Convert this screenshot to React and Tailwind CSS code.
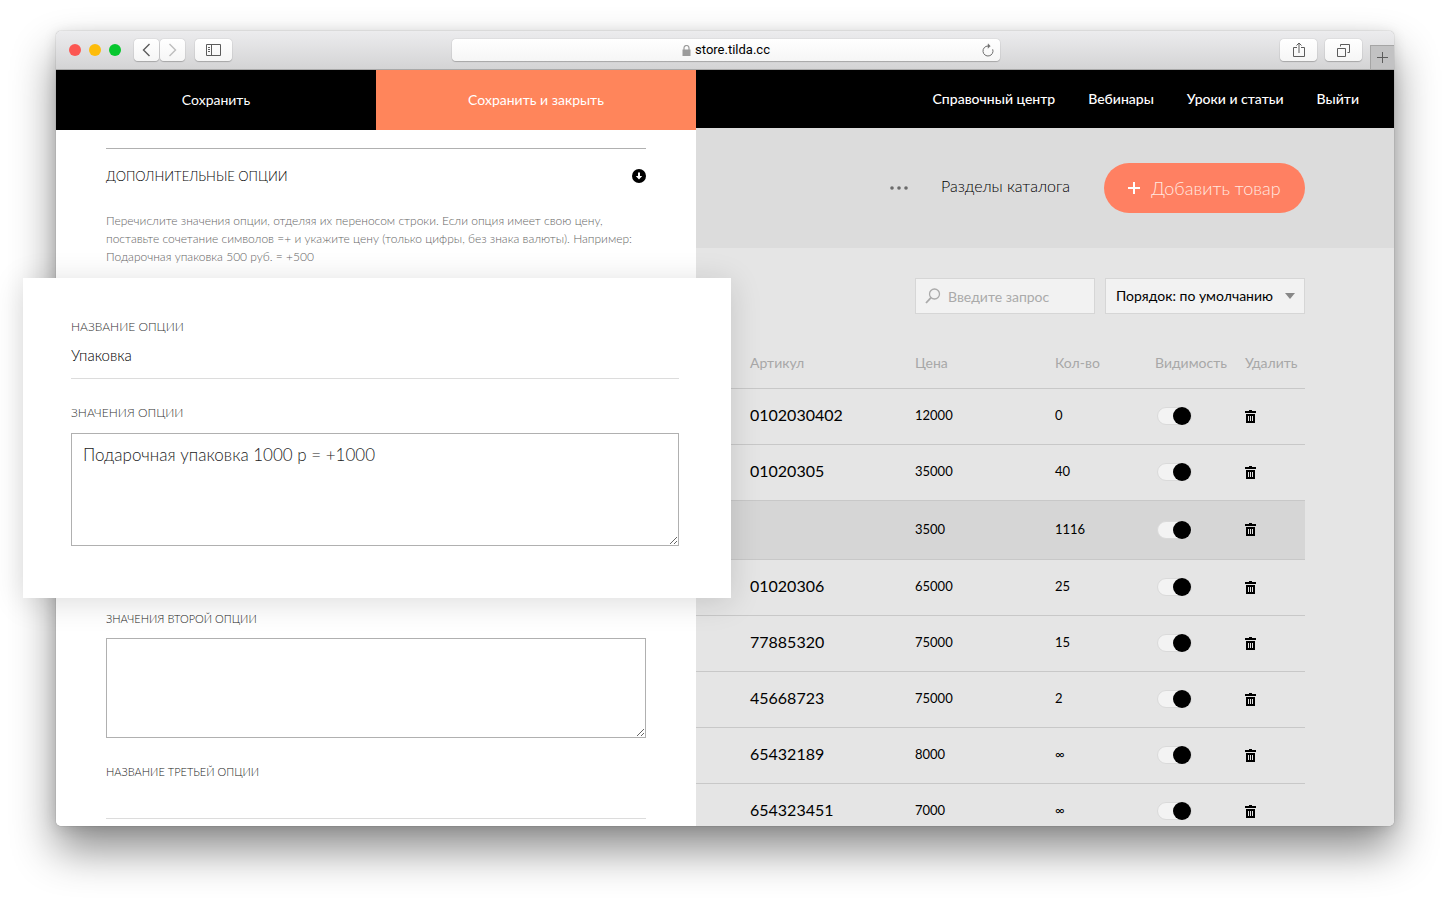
import React, { useState } from 'react';

const products = [
  { sku: '0102030402', price: '12000', qty: '0' },
  { sku: '01020305', price: '35000', qty: '40' },
  { sku: '', price: '3500', qty: '1116', active: true },
  { sku: '01020306', price: '65000', qty: '25' },
  { sku: '77885320', price: '75000', qty: '15' },
  { sku: '45668723', price: '75000', qty: '2' },
  { sku: '65432189', price: '8000', qty: '∞' },
  { sku: '654323451', price: '7000', qty: '∞' },
];

const navLinks = ['Справочный центр', 'Вебинары', 'Уроки и статьи', 'Выйти'];

const toolButton =
  'flex h-[22px] items-center justify-center rounded bg-gradient-to-b from-white to-[#f6f6f6] shadow-[0_0_1px_rgba(0,0,0,0.35),0_1px_1px_rgba(0,0,0,0.2)]';

const TrashIcon = () => (
  <svg width="11" height="13" viewBox="0 0 11 13" shapeRendering="crispEdges">
    <path d="M4 0h3v1h4v2H0V1h4z" fill="#000" />
    <path d="M1 4h9v9H1z" fill="#000" />
    <path d="M3 6h1v5H3zM5 6h1v5H5zM7 6h1v5H7z" fill="#e5e5e5" />
  </svg>
);

const BrowserBar = () => (
  <div className="flex h-[39px] shrink-0 items-center rounded-t-[5px] border-b border-[#a9a9a9] bg-gradient-to-b from-[#ececee] to-[#d4d4d5]">
    <div className="flex gap-2 pl-[13px]">
      <span className="h-3 w-3 rounded-full bg-[#fc5753]" />
      <span className="h-3 w-3 rounded-full bg-[#fdbc0a]" />
      <span className="h-3 w-3 rounded-full bg-[#06c72e]" />
    </div>
    <div className="ml-[13px] flex gap-px">
      <button aria-label="Назад" className={`${toolButton} w-[25px]`}>
        <svg width="9" height="14" viewBox="0 0 9 14" fill="none" stroke="#5c5c5c" strokeWidth="1.4">
          <path d="M7.5 1L1.5 7l6 6" />
        </svg>
      </button>
      <button aria-label="Вперёд" className={`${toolButton} w-[25px]`}>
        <svg width="9" height="14" viewBox="0 0 9 14" fill="none" stroke="#bdbdbd" strokeWidth="1.4">
          <path d="M1.5 1l6 6-6 6" />
        </svg>
      </button>
    </div>
    <button aria-label="Боковое меню" className={`${toolButton} ml-[10px] w-[37px]`}>
      <svg width="15" height="12" viewBox="0 0 15 12" fill="none" stroke="#5c5c5c">
        <path d="M.5.5h14v11H.5zM5.5.5v11M2 3.5h2M2 5.5h2M2 7.5h2" />
      </svg>
    </button>
    <div className="flex flex-1 justify-center pr-[76px] pl-4">
      <div className={`${toolButton} relative w-full max-w-[548px] gap-1`}>
        <svg width="9" height="11" viewBox="0 0 9 11">
          <path d="M2 5V3a2.5 2.5 0 015 0v2" fill="none" stroke="#9b9b9b" strokeWidth="1.2" />
          <path d="M.5 4.500h8V11h-8z" fill="#9b9b9b" />
        </svg>
        <span className="font-[Roboto,sans-serif] text-[13px] text-black">store.tilda.cc</span>
        <button aria-label="Обновить" className="absolute right-[6px]">
          <svg width="12" height="14" viewBox="0 0 12 14" fill="none" stroke="#6e6e6e">
            <path d="M10.700 6.300A5 5 0 116 3h1.500" />
            <path d="M6 .8L8.300 3 6 5.300z" fill="#6e6e6e" strokeWidth=".4" />
          </svg>
        </button>
      </div>
    </div>
    <button aria-label="Поделиться" className={`${toolButton} w-[37px]`}>
      <svg width="12" height="16" viewBox="0 0 12 16" fill="none" stroke="#5c5c5c">
        <path d="M4 5.500H.5v9h11v-9H8M6 11V1M3.500 3.500L6 1l2.500 2.500" />
      </svg>
    </button>
    <button aria-label="Вкладки" className={`${toolButton} ml-2 w-[37px]`}>
      <svg width="13" height="13" viewBox="0 0 13 13" fill="none" stroke="#5c5c5c">
        <path d="M.5 4.500h8v8h-8zM3.500 2.500v-2h9v8h-2" />
      </svg>
    </button>
    <button
      aria-label="Новая вкладка"
      className="ml-2 flex h-6 w-6 items-center justify-center self-end border-t border-l border-[#a5a5a5] bg-[#c2c2c3]"
    >
      <svg width="11" height="11" viewBox="0 0 11 11" stroke="#5c5c5c">
        <path d="M5.500 0v11M0 5.500h11" />
      </svg>
    </button>
  </div>
);

const EditPanel = () => {
  const [name, setName] = useState('Упаковка');
  const [values, setValues] = useState('Подарочная упаковка 1000 р = +1000');

  return (
    <section className="relative z-10 flex w-[640px] shrink-0 flex-col rounded-bl-[5px] bg-white">
      <div className="flex h-[60px] shrink-0 text-sm text-white">
        <button className="flex-1 bg-black">Сохранить</button>
        <button className="flex-1 bg-[#ff855b]">Сохранить и закрыть</button>
      </div>
      <div className="mt-[18px] px-[50px]">
        <div className="flex items-center justify-between border-t border-[#b0b0b0] pt-[19px]">
          <h2 className="text-[13px] leading-4 font-light text-black">ДОПОЛНИТЕЛЬНЫЕ ОПЦИИ</h2>
          <button aria-label="Свернуть">
            <svg width="14" height="14" viewBox="0 0 14 14">
              <circle cx="7" cy="7" r="7" fill="#000" />
              <path d="M6 3.500h2V7h2.200L7 10.500 3.800 7H6z" fill="#fff" />
            </svg>
          </button>
        </div>
        <p className="mt-7 text-xs leading-[18px] font-light text-[#666]">
          Перечислите значения опции, отделяя их переносом строки. Если опция имеет свою цену,
          <br />
          поставьте сочетание символов =+ и укажите цену (только цифры, без знака валюты). Например:
          <br />
          Подарочная упаковка 500 руб. = +500
        </p>

        <div className="relative mt-3 -mr-[85px] -ml-[83px] flex flex-col bg-white pt-10 pr-[52px] pb-[52px] pl-12 shadow-[0_4px_30px_rgba(0,0,0,0.14)]">
          <label htmlFor="option-name" className="text-xs leading-[18px] font-light text-[#333]">
            НАЗВАНИЕ ОПЦИИ
          </label>
          <input
            id="option-name"
            value={name}
            onChange={(e) => setName(e.target.value)}
            className="h-[43px] border-b border-[#dcdcdc] pb-1 text-[15px] font-light text-black outline-none"
          />
          <label htmlFor="option-values" className="mt-[25px] text-xs leading-[18px] font-light text-[#333]">
            ЗНАЧЕНИЯ ОПЦИИ
          </label>
          <textarea
            id="option-values"
            value={values}
            onChange={(e) => setValues(e.target.value)}
            className="mt-[11px] h-[113px] border border-[#b0b0b0] px-[11px] py-2 text-[17px] font-light text-[#222] outline-none"
          />
        </div>

        <div className="flex flex-col pt-3">
          <label htmlFor="second-values" className="text-[11px] leading-[18px] font-light text-[#222]">
            ЗНАЧЕНИЯ ВТОРОЙ ОПЦИИ
          </label>
          <textarea id="second-values" className="mt-[10px] h-[100px] border border-[#b0b0b0] outline-none" />
          <label htmlFor="third-name" className="mt-[25px] text-[11px] leading-[18px] font-light text-[#222]">
            НАЗВАНИЕ ТРЕТЬЕЙ ОПЦИИ
          </label>
          <input id="third-name" className="h-[38px] border-b border-[#dcdcdc] outline-none" />
        </div>
      </div>
    </section>
  );
};

const ProductRow = ({ item }) => (
  <tr className={`border-y border-[#c8c8c8] ${item.active ? 'h-[59px] bg-[#d6d6d6]' : 'h-14'}`}>
    <td className="pb-[3px] pl-[54px] text-base">{item.sku}</td>
    <td className="text-[13px]">{item.price}</td>
    <td className="text-[13px]">{item.qty}</td>
    <td className="pl-[2px]">
      <input
        type="checkbox"
        defaultChecked
        aria-label="Видимость"
        className="flex h-[18px] w-[35px] appearance-none items-center rounded-full border border-[#dadada] bg-[#f3f3f3] before:h-[18px] before:w-[18px] before:shrink-0 before:rounded-full before:bg-black checked:justify-end"
      />
    </td>
    <td>
      <button aria-label="Удалить" className="block">
        <TrashIcon />
      </button>
    </td>
  </tr>
);

const Catalog = () => (
  <div className="flex min-w-0 flex-1 flex-col overflow-hidden rounded-br-[5px] bg-[#e5e5e5]">
    <nav className="flex h-[58px] shrink-0 items-center justify-end gap-[33px] bg-black pr-[35px] text-sm font-medium text-white">
      {navLinks.map((link) => (
        <a key={link} href="#">
          {link}
        </a>
      ))}
    </nav>
    <header className="flex h-[120px] shrink-0 items-center justify-end bg-[#dcdcdc] pr-[89px]">
      <button aria-label="Ещё">
        <svg width="18" height="4" viewBox="0 0 18 4" fill="#6b6b6b">
          <circle cx="2" cy="2" r="1.800" />
          <circle cx="9" cy="2" r="1.800" />
          <circle cx="16" cy="2" r="1.800" />
        </svg>
      </button>
      <a href="#" className="ml-[33px] pb-1 text-base font-light text-black">
        Разделы каталога
      </a>
      <button className="ml-[34px] flex h-[50px] w-[201px] items-center justify-center gap-[11px] rounded-full bg-[#ff8062] text-lg font-light text-[#ffe9e0]">
        <svg width="12" height="12" viewBox="0 0 12 12" stroke="#fff" strokeWidth="2">
          <path d="M6 0v12M0 6h12" />
        </svg>
        Добавить товар
      </button>
    </header>
    <div className="flex shrink-0 justify-end gap-[10px] pt-[30px] pr-[89px]">
      <div className="relative">
        <svg className="absolute top-[10px] left-[10px]" width="16" height="16" viewBox="0 0 16 16" fill="none" stroke="#aaa" strokeWidth="1.300">
          <circle cx="9.500" cy="6" r="5" />
          <path d="M6 9.600L1 15" strokeWidth="1.800" />
        </svg>
        <input
          type="search"
          aria-label="Поиск"
          placeholder="Введите запрос"
          className="h-9 w-[180px] border border-[#d6d6d6] bg-[#f2f2f2] pl-8 text-sm outline-none placeholder:text-[#aaa]"
        />
      </div>
      <div className="relative">
        <select
          aria-label="Порядок"
          className="h-9 w-[200px] appearance-none border border-[#d6d6d6] bg-[#f2f2f2] pl-[10px] text-sm text-black outline-none"
        >
          <option>Порядок: по умолчанию</option>
        </select>
        <svg className="pointer-events-none absolute top-[15px] right-[10px]" width="10" height="6" viewBox="0 0 10 6">
          <path d="M0 0h10L5 6z" fill="#888" />
        </svg>
      </div>
    </div>
    <div className="pt-[24px] pr-[89px]">
      <table className="w-full table-fixed border-collapse text-left text-black">
        <thead>
          <tr className="h-[50px] text-sm text-[#a8a8a8]">
            <th className="pl-[54px] font-normal">Артикул</th>
            <th className="w-[140px] font-normal">Цена</th>
            <th className="w-[100px] font-normal">Кол-во</th>
            <th className="w-[90px] font-normal">Видимость</th>
            <th className="w-[60px] font-normal">Удалить</th>
          </tr>
        </thead>
        <tbody>
          {products.map((item, i) => (
            <ProductRow key={i} item={item} />
          ))}
        </tbody>
      </table>
    </div>
  </div>
);

export default function App() {
  return (
    <div className="flex h-screen flex-col bg-white px-14 pt-[31px] pb-20 font-[Lato,sans-serif]">
      <div className="flex min-h-0 flex-1 flex-col rounded-[5px] shadow-[0_0_1px_rgba(0,0,0,0.5),0_2px_14px_rgba(0,0,0,0.12),0_24px_44px_rgba(0,0,0,0.45)]">
        <BrowserBar />
        <main className="flex min-h-0 flex-1">
          <EditPanel />
          <Catalog />
        </main>
      </div>
    </div>
  );
}
